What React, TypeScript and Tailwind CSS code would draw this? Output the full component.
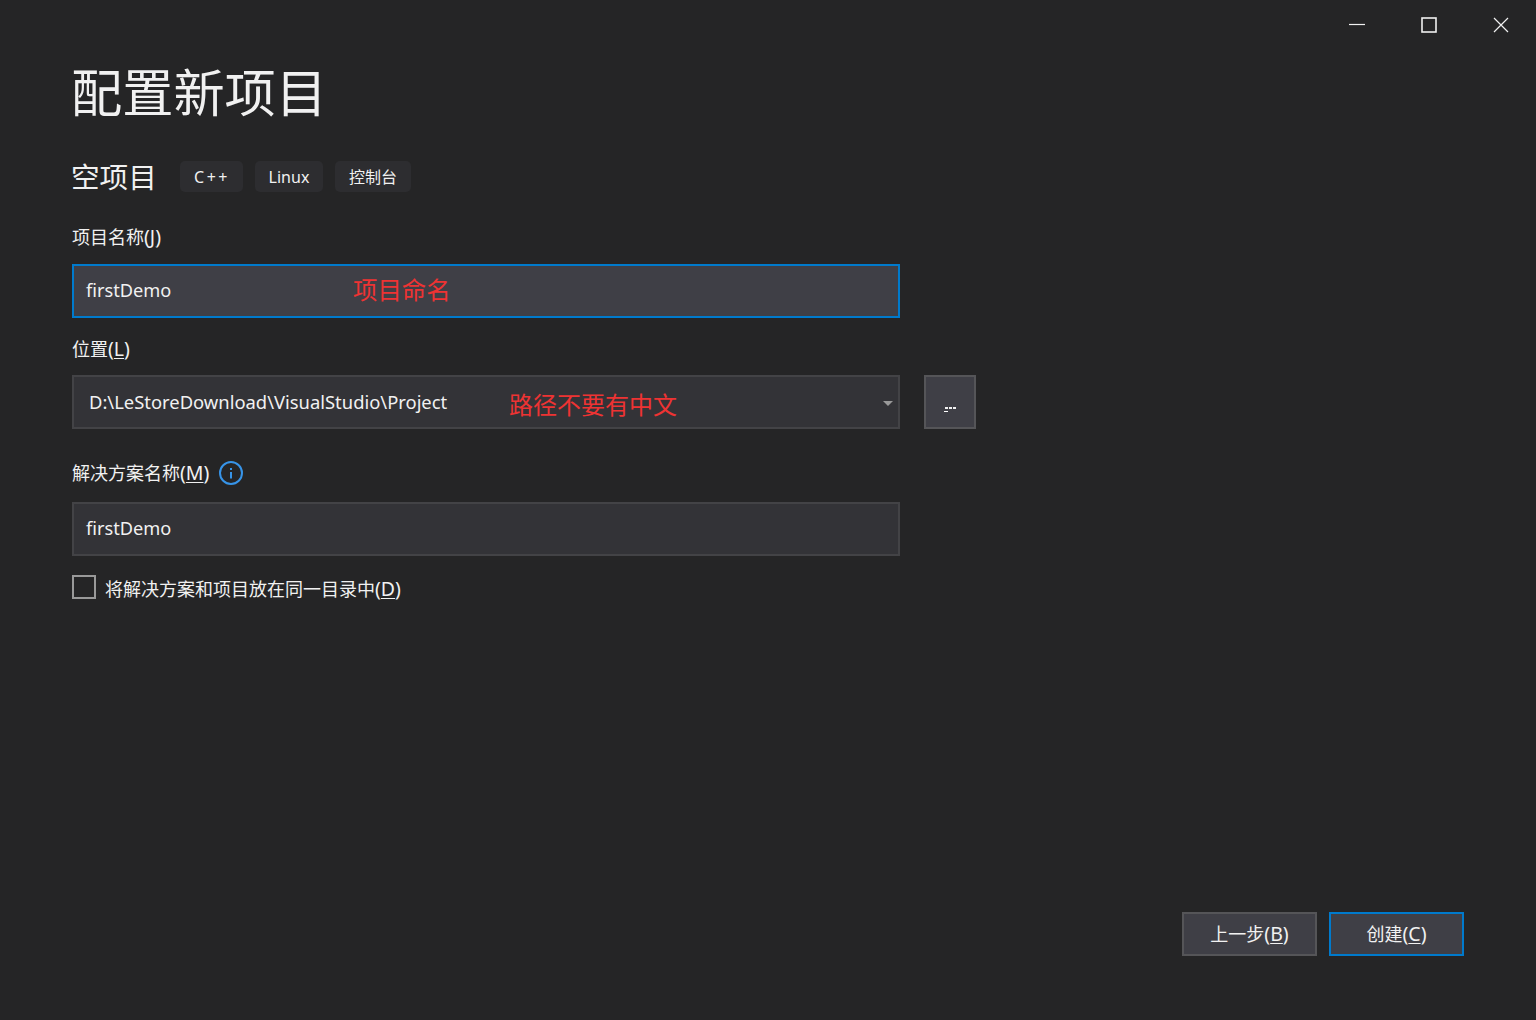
import type { ReactNode } from 'react';

const FONT = "font-['Noto_Sans','Noto_Sans_CJK_SC',sans-serif]";

function Tag({ width, children }: { width: string; children: ReactNode }) {
  return (
    <span className={`${width} h-[31px] flex items-center justify-center rounded-[5px] bg-[#2d2d30] text-[16px] text-[#f1f1f1]`}>
      {children}
    </span>
  );
}

function Hotkey({ letter }: { letter: string }) {
  return (
    <span className="text-[19.5px]">
      (<span className="underline underline-offset-2">{letter}</span>)
    </span>
  );
}

function Label({ text, hotkey }: { text: string; hotkey: string }) {
  return (
    <span className="text-[18px] leading-[24px] text-[#f1f1f1]">
      {text}
      <Hotkey letter={hotkey} />
    </span>
  );
}

function WindowButtons() {
  return (
    <div className="flex justify-end h-[50px] pr-[19px] pt-[15px] gap-[40px] text-[#f1f1f1]">
      <svg width="32" height="20" viewBox="0 0 32 20" fill="none" stroke="currentColor">
        <path d="M8 9.500h16" strokeWidth="1.2" />
      </svg>
      <svg width="32" height="20" viewBox="0 0 32 20" fill="none" stroke="currentColor">
        <rect x="9" y="3" width="14" height="14" strokeWidth="1.6" />
      </svg>
      <svg width="32" height="20" viewBox="0 0 32 20" fill="none" stroke="currentColor">
        <path d="M9 3l14 14M23 3L9 17" strokeWidth="1.2" />
      </svg>
    </div>
  );
}

export default function App() {
  return (
    <div className={`${FONT} w-[1536px] h-[1020px] flex flex-col bg-[#252526] overflow-hidden`}>
      <WindowButtons />

      <div className="flex-1 flex flex-col pl-[72px] pr-[72px]">
        <h1 className="mt-[7px] -ml-[1px] text-[51.2px] leading-[70px] text-[#f1f1f1]">配置新项目</h1>

        <div className="mt-[34px] flex items-center h-[31px]">
          <h2 className="-ml-[1px] w-[84px] whitespace-nowrap text-[28.6px] leading-[31px] text-[#f1f1f1]">空项目</h2>
          <div className="ml-[25px] flex gap-[12px]">
            <Tag width="w-[63px]"><span className="pl-[1px] tracking-[2.500px]">C++</span></Tag>
            <Tag width="w-[68px]">Linux</Tag>
            <Tag width="w-[76px]">控制台</Tag>
          </div>
        </div>

        {/* Project name */}
        <div className="mt-[33px]">
          <Label text="项目名称" hotkey="J" />
        </div>
        <div className="mt-[14px] w-[828px] h-[54px] flex items-center pl-[12px] border-2 border-[#007acc] bg-[#3f3f46] text-[18.2px] text-[#f1f1f1]">
          <span className="w-[267px]">firstDemo</span>
          <span className="-mt-[2px] text-[24.4px] text-[#ee3333]">项目命名</span>
        </div>

        {/* Location */}
        <div className="mt-[19px]">
          <Label text="位置" hotkey="L" />
        </div>
        <div className="mt-[13px] flex gap-[24px]">
          <div className="relative w-[828px] h-[54px] flex items-center pl-[15px] border-2 border-[#434346] bg-[#333337] text-[18.4px] text-[#f1f1f1]">
            <span className="w-[420px]">D:\LeStoreDownload\VisualStudio\Project</span>
            <span className="mt-[6px] text-[24px] text-[#ee3333]">路径不要有中文</span>
            <svg className="absolute right-[5px] top-[24px]" width="10" height="5" viewBox="0 0 10 5">
              <path d="M0 0h10L5 5z" fill="#999999" />
            </svg>
          </div>
          <div className="relative w-[52px] h-[54px] border-2 border-[#555558] bg-[#3f3f46]">
            <span className="absolute left-[18px] top-[34px] w-[4px] h-[1px] bg-white" />
            <span className="absolute left-[19px] top-[30px] flex gap-[1px]">
              <i className="w-[3px] h-[2px] bg-[#f1f1f1]" />
              <i className="w-[3px] h-[2px] bg-[#f1f1f1]" />
              <i className="w-[3px] h-[2px] bg-[#f1f1f1]" />
            </span>
          </div>
        </div>

        {/* Solution name */}
        <div className="mt-[32px] flex items-center gap-[10px]">
          <Label text="解决方案名称" hotkey="M" />
          <svg width="24" height="24" viewBox="0 0 24 24" fill="none">
            <circle cx="12" cy="12" r="11" stroke="#3794e8" strokeWidth="2" />
            <path d="M12 11v6.500" stroke="#3794e8" strokeWidth="2" />
            <rect x="11" y="7" width="2" height="2" fill="#3794e8" />
          </svg>
        </div>
        <div className="mt-[17px] w-[828px] h-[54px] flex items-center pl-[12px] border-2 border-[#434346] bg-[#333337] text-[18.2px] text-[#f1f1f1]">
          firstDemo
        </div>

        <label className="mt-[15px] flex items-center gap-[9px]">
          <span className="w-[24px] h-[24px] border-2 border-[#999999]" />
          <span className="mt-[6px]">
            <Label text="将解决方案和项目放在同一目录中" hotkey="D" />
          </span>
        </label>

        {/* Footer actions */}
        <div className="mt-auto mb-[64px] flex justify-end gap-[12px]">
          <button className="w-[135px] h-[44px] border-2 border-[#555558] bg-[#3f3f46] text-[18px] text-[#f1f1f1]">
            上一步
            <Hotkey letter="B" />
          </button>
          <button className="w-[135px] h-[44px] border-2 border-[#007acc] bg-[#3f3f46] text-[18px] text-[#f1f1f1]">
            创建
            <Hotkey letter="C" />
          </button>
        </div>
      </div>
    </div>
  );
}
